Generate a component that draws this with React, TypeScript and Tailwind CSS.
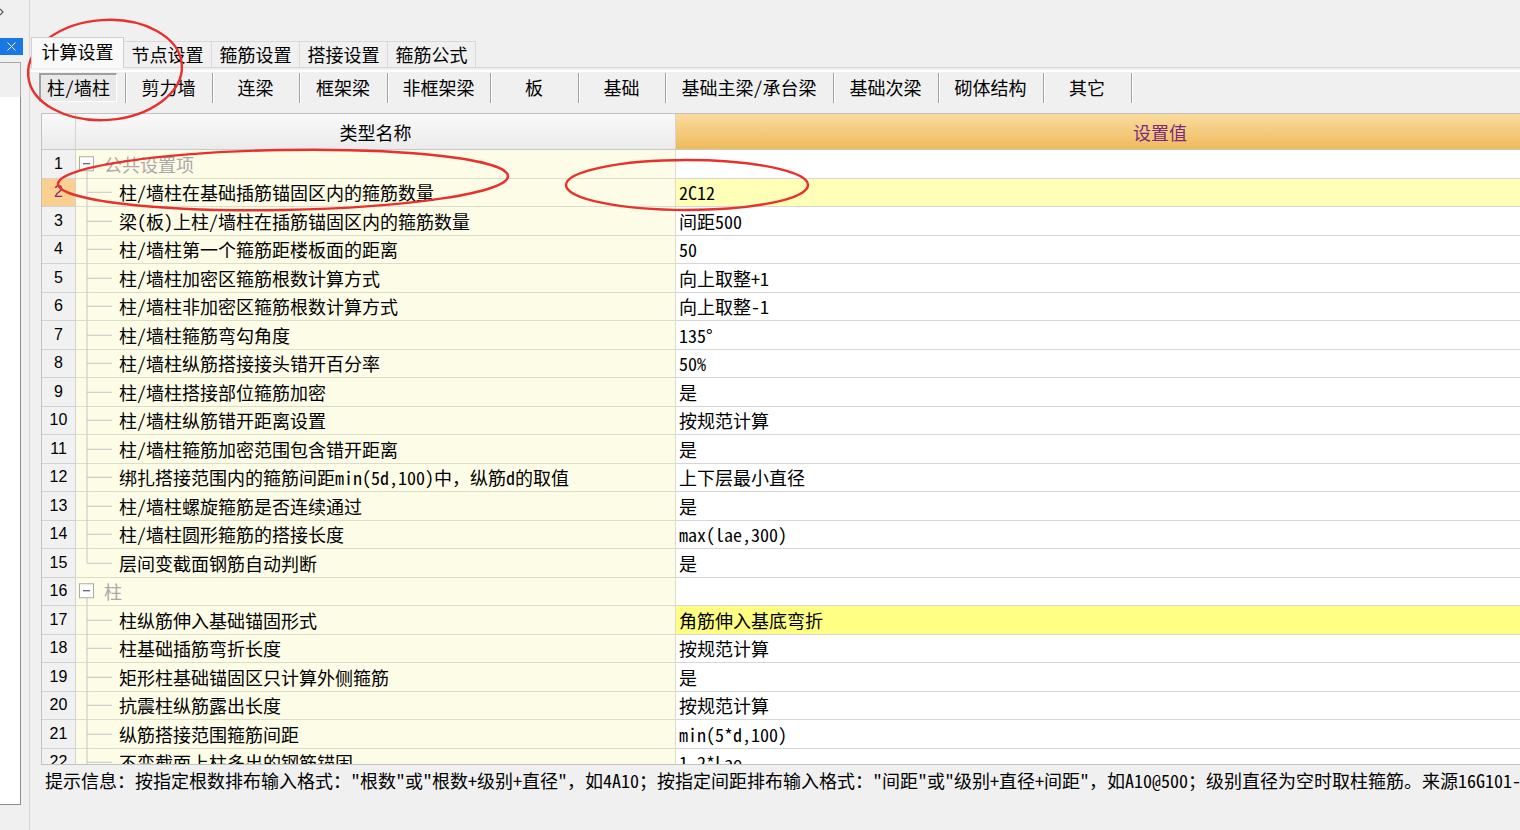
import { X } from 'lucide-react'

type Row = {
  n: number
  name: string
  value?: string
  group?: boolean
  last?: boolean
  hl?: 'sel' | 'yellow'
}

const mainTabs = ['节点设置', '箍筋设置', '搭接设置', '箍筋公式']

// width = distance between the separators of the sub tab strip
const subTabs = [
  { label: '剪力墙', w: 'w-[87px]' },
  { label: '连梁', w: 'w-[87px]' },
  { label: '框架梁', w: 'w-[88px]' },
  { label: '非框架梁', w: 'w-[103px]' },
  { label: '板', w: 'w-[88px]' },
  { label: '基础', w: 'w-[87px]' },
  { label: '基础主梁/承台梁', w: 'w-[168px]' },
  { label: '基础次梁', w: 'w-[105px]' },
  { label: '砌体结构', w: 'w-[105px]' },
  { label: '其它', w: 'w-[88px]' },
]

const rows: Row[] = [
  { n: 1, name: '公共设置项', group: true },
  { n: 2, name: '柱/墙柱在基础插筋锚固区内的箍筋数量', value: '2C12', hl: 'sel' },
  { n: 3, name: '梁(板)上柱/墙柱在插筋锚固区内的箍筋数量', value: '间距500' },
  { n: 4, name: '柱/墙柱第一个箍筋距楼板面的距离', value: '50' },
  { n: 5, name: '柱/墙柱加密区箍筋根数计算方式', value: '向上取整+1' },
  { n: 6, name: '柱/墙柱非加密区箍筋根数计算方式', value: '向上取整-1' },
  { n: 7, name: '柱/墙柱箍筋弯勾角度', value: '135°' },
  { n: 8, name: '柱/墙柱纵筋搭接接头错开百分率', value: '50%' },
  { n: 9, name: '柱/墙柱搭接部位箍筋加密', value: '是' },
  { n: 10, name: '柱/墙柱纵筋错开距离设置', value: '按规范计算' },
  { n: 11, name: '柱/墙柱箍筋加密范围包含错开距离', value: '是' },
  { n: 12, name: '绑扎搭接范围内的箍筋间距min(5d,100)中，纵筋d的取值', value: '上下层最小直径' },
  { n: 13, name: '柱/墙柱螺旋箍筋是否连续通过', value: '是' },
  { n: 14, name: '柱/墙柱圆形箍筋的搭接长度', value: 'max(lae,300)' },
  { n: 15, name: '层间变截面钢筋自动判断', value: '是', last: true },
  { n: 16, name: '柱', group: true },
  { n: 17, name: '柱纵筋伸入基础锚固形式', value: '角筋伸入基底弯折', hl: 'yellow' },
  { n: 18, name: '柱基础插筋弯折长度', value: '按规范计算' },
  { n: 19, name: '矩形柱基础锚固区只计算外侧箍筋', value: '是' },
  { n: 20, name: '抗震柱纵筋露出长度', value: '按规范计算' },
  { n: 21, name: '纵筋搭接范围箍筋间距', value: 'min(5*d,100)' },
  { n: 22, name: '不变截面上柱多出的钢筋锚固', value: '1.2*Lae' },
]

function LeftPane() {
  return (
    <div className="flex w-[30px] shrink-0 flex-col border-r border-[#d6d6d6]">
      <svg width="6" height="38" className="shrink-0">
        <path d="M0 9 L3 12 L0 15" fill="none" stroke="#555" strokeWidth="1.2" />
      </svg>
      <div className="flex h-[17px] w-[23px] items-center justify-center bg-[#1a78e4] text-white">
        <X size={15} strokeWidth={1.5} />
      </div>
      <div className="mt-[7px] h-[35px] w-[21px] border-t border-r border-[#a8a8a8] bg-[#f0f0f0]" />
      <div className="h-[708px] w-[21px] border-r border-b border-[#8c8c8c] bg-white" />
    </div>
  )
}

function MainTabs() {
  return (
    <div className="mt-[37px] flex h-[30px] shrink-0 items-end pl-[1px]">
      <div className="relative z-10 -mb-[1px] flex h-[31px] w-[93px] items-center justify-center border border-b-0 border-[#cfcfcf] bg-[#f9f9f9] pb-[4px] text-[18px] leading-none">
        计算设置
      </div>
      {mainTabs.map((t) => (
        <div
          key={t}
          className="-ml-px flex h-[26px] w-[89px] items-center justify-center border border-b-0 border-[#d9d9d9] bg-[#f0f0f0] pb-[1px] text-[18px] leading-none"
        >
          {t}
        </div>
      ))}
    </div>
  )
}

function SubTabs() {
  return (
    <div className="flex h-[41px] shrink-0 items-start pt-[1px]">
      <div className="ml-[9px] flex h-[29px] w-[78px] items-center justify-center border-t-2 border-l-2 border-r border-b border-t-[#a0a0a0] border-l-[#a0a0a0] border-r-white border-b-white bg-[#e9e9e9] pb-[2px] text-[18px] leading-none">
        柱/墙柱
      </div>
      <div className="w-[8px]" />
      {subTabs.map((t) => (
        <div key={t.label} className={`flex h-[30px] shrink-0 ${t.w}`}>
          <div className="h-full w-px bg-[#a3a3a3]" />
          <div className="h-full w-px bg-white" />
          <div className="flex flex-1 items-center justify-center pr-[2px] pb-[3px] text-[18px] leading-none">{t.label}</div>
        </div>
      ))}
      <div className="h-[30px] w-px bg-[#a3a3a3]" />
      <div className="h-[30px] w-px bg-white" />
    </div>
  )
}

function TreeCell({ r }: { r: Row }) {
  if (r.group) {
    return (
      <div className="flex h-full items-center">
        <svg width="28" height="28.5" className="shrink-0">
          <rect x="3.5" y="6.75" width="14" height="14" fill="#fff" stroke="#ababab" />
          <line x1="7" y1="13.75" x2="14" y2="13.75" stroke="#3a3a3a" />
          <line x1="11" y1="21" x2="11" y2="28.5" stroke="#c4c4c4" />
        </svg>
        <span className="text-[18px] leading-none text-[#a9a9a9]">{r.name}</span>
      </div>
    )
  }
  return (
    <div className="flex h-full items-center">
      <svg width="43" height="28.5" className="shrink-0">
        <line x1="11" y1="0" x2="11" y2={r.last ? 14.25 : 28.5} stroke="#c4c4c4" />
        <line x1="11" y1="14.25" x2="36" y2="14.25" stroke="#c4c4c4" />
      </svg>
      <span className="whitespace-nowrap text-[18px] leading-none">{r.name}</span>
    </div>
  )
}

function Grid() {
  return (
    <div className="ml-[11px] h-[652px] w-[1700px] shrink-0 overflow-hidden border-t border-l border-b border-[#c2c2c2]">
      <div className="flex h-[36px] border-b border-[#c8c8c8]">
        <div className="w-[34px] shrink-0 border-r border-[#d4d4d4] bg-linear-to-b from-[#f9f9f9] to-[#ebebeb]" />
        <div className="flex w-[600px] shrink-0 items-center justify-center border-r border-[#d4d4d4] bg-linear-to-b from-[#f9f9f9] to-[#ebebeb] text-[18px] leading-none">
          类型名称
        </div>
        <div className="flex w-[968px] shrink-0 items-center justify-center bg-linear-to-b from-[#fadb9f] to-[#efbb5a] text-[18px] leading-none text-[#7b2a80]">
          设置值
        </div>
      </div>
      {rows.map((r) => (
        <div key={r.n} className="flex h-[28.5px] shrink-0">
          <div
            className={`flex w-[34px] shrink-0 items-center justify-center border-r border-b border-[#d2d2d2] font-['Liberation_Sans',sans-serif] text-[16px] leading-none ${
              r.hl === 'sel' ? 'bg-[#fbcf8f] text-[#7b2a80]' : 'bg-[#f1f1f1]'
            }`}
          >
            {r.n}
          </div>
          <div className="w-[600px] shrink-0 border-r border-b border-[#dcdccb] bg-[#fdfce7]">
            <TreeCell r={r} />
          </div>
          <div
            className={`flex w-[968px] shrink-0 items-center border-b border-[#d6d6d6] pl-[3px] text-[18px] leading-none ${
              r.hl === 'sel' ? 'bg-[#ffffb8]' : r.hl === 'yellow' ? 'bg-[#ffff84]' : 'bg-white'
            }`}
          >
            {r.value}
          </div>
        </div>
      ))}
    </div>
  )
}

function Annotations() {
  return (
    <svg className="pointer-events-none absolute inset-0" width="1520" height="830">
      <g fill="none" stroke="#e8302c" strokeWidth="2.4">
        <ellipse cx="105" cy="70" rx="77" ry="50" transform="rotate(-4 105 70)" />
        <ellipse cx="283" cy="180" rx="225" ry="30" transform="rotate(-1 283 180)" />
        <ellipse cx="687" cy="185" rx="121" ry="25" />
      </g>
    </svg>
  )
}

export default function App() {
  return (
    <div className="relative flex h-[830px] w-[1520px] overflow-hidden bg-[#f0f0f0] font-['Noto_Sans_Mono_CJK_SC','Noto_Sans_CJK_SC',sans-serif] text-black">
      <LeftPane />
      <div className="flex min-w-0 flex-1 flex-col">
        <MainTabs />
        <div className="flex flex-1 flex-col border-t border-[#d6d6d6]">
          <div className="mt-[2px] h-[2px] shrink-0 bg-white" />
          <SubTabs />
          <Grid />
          <div className="whitespace-nowrap pt-[5px] pl-[15px] text-[18px] leading-[20px]">
            提示信息：按指定根数排布输入格式："根数"或"根数+级别+直径"，如4A10；按指定间距排布输入格式："间距"或"级别+直径+间距"，如A10@500；级别直径为空时取柱箍筋。来源16G101-1第65页
          </div>
        </div>
      </div>
      <Annotations />
    </div>
  )
}
